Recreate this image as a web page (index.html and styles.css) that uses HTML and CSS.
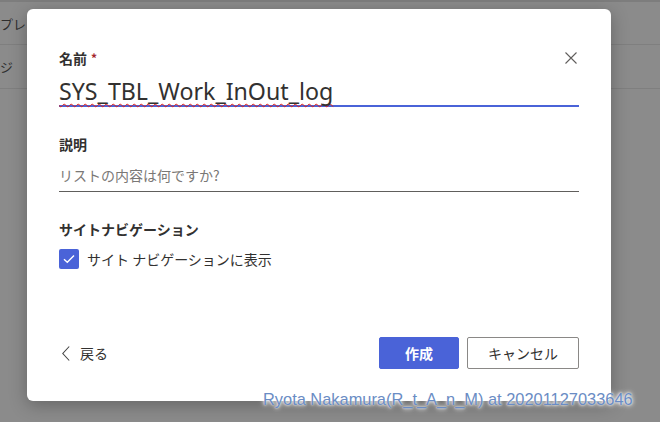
FILE: index.html
```html
<!DOCTYPE html>
<html lang="ja">
<head>
<meta charset="utf-8">
<title>リストの作成</title>
<link rel="stylesheet" href="styles.css">
</head>
<body>
<div class="page">
  <div class="page-row row-first"><span class="page-text">プレ</span></div>
  <div class="page-row"><span class="page-text">ジ</span></div>
</div>

<div class="dialog">
  <div class="label-row">
    <span class="label">名前<span class="req">*</span></span>
    <svg class="close" width="12" height="12" viewBox="0 0 12 12"><path d="M0.5 0.5 L11.5 11.5 M11.5 0.5 L0.5 11.5" stroke="#605e5c" stroke-width="1.1" fill="none"/></svg>
  </div>
  <div class="name-input"><span class="spell">SYS_TBL_Work_InOut_log</span></div>

  <div class="label sec">説明</div>
  <div class="desc-input">リストの内容は何ですか?</div>

  <div class="label sec">サイトナビゲーション</div>
  <div class="check-row">
    <span class="checkbox"><svg width="12" height="10" viewBox="0 0 12 10"><path d="M1 5.2 L4.3 8.3 L11 1.5" stroke="#fff" stroke-width="1.4" fill="none"/></svg></span>
    <span class="check-text">サイト ナビゲーションに表示</span>
  </div>

  <div class="footer">
    <div class="back">
      <svg width="8" height="15" viewBox="0 0 8 15"><path d="M7.2 0.5 L0.8 7.5 L7.2 14.5" stroke="#444" stroke-width="1.1" fill="none"/></svg>
      <span>戻る</span>
    </div>
    <div class="buttons">
      <button class="btn primary">作成</button>
      <button class="btn secondary">キャンセル</button>
    </div>
  </div>
</div>

<div class="watermark">Ryota Nakamura(R_t_A_n_M) at 20201127033646</div>
</body>
</html>
```

FILE: styles.css
```css
html, body {
  margin: 0;
  padding: 0;
}
body {
  width: 660px;
  height: 422px;
  overflow: hidden;
  background: #8b8b8b;
  font-family: "Noto Sans CJK JP", "Noto Sans", sans-serif;
  position: relative;
}
.page {
  border-top: 2px solid #7d7d7d;
}
.page-row {
  height: 43px;
  border-bottom: 1px solid #7f7f7f;
  display: flex;
  align-items: center;
  overflow: hidden;
}
.row-first {
  height: 42px;
}
.page-text {
  font-size: 13px;
  color: #2e2e2e;
  white-space: nowrap;
}

.dialog {
  position: absolute;
  left: 27px;
  top: 9px;
  width: 584px;
  height: 392px;
  box-sizing: border-box;
  background: #fff;
  border-radius: 6px;
  box-shadow: 0 4px 18px rgba(0, 0, 0, 0.28);
  padding: 40px 32px 32px;
  display: flex;
  flex-direction: column;
}
.label-row {
  display: flex;
  justify-content: space-between;
  align-items: center;
  height: 18px;
}
.label {
  font-size: 14px;
  font-weight: 700;
  line-height: 18px;
  color: #323130;
}
.req {
  color: #a4262c;
  font-size: 12px;
  margin-left: 4px;
  vertical-align: top;
}
.close {
  margin-right: 2px;
}
.name-input {
  margin-top: 8px;
  height: 28px;
  padding-top: 2px;
  line-height: 28px;
  font-family: "Noto Sans", "Open Sans", sans-serif;
  font-size: 23.2px;
  color: #323130;
  border-bottom: 2px solid #4a63d8;
}
.spell {
  text-decoration: underline wavy #e0201a;
  text-decoration-thickness: 1px;
  text-decoration-skip-ink: none;
  text-underline-offset: 3px;
}
.sec {
  margin-top: 28px;
}
.desc-input {
  margin-top: 7px;
  height: 31px;
  line-height: 31px;
  font-size: 14px;
  color: #7a7876;
  border-bottom: 1px solid #605e5c;
}
.check-row {
  margin-top: 11px;
  display: flex;
  align-items: center;
  gap: 8px;
  height: 20px;
}
.checkbox {
  width: 20px;
  height: 20px;
  border-radius: 2px;
  background: #4a63d8;
  display: flex;
  align-items: center;
  justify-content: center;
}
.check-text {
  font-size: 14px;
  color: #323130;
}
.footer {
  margin-top: auto;
  display: flex;
  justify-content: space-between;
  align-items: center;
  height: 32px;
}
.back {
  display: flex;
  align-items: center;
  gap: 10px;
  padding-left: 3px;
  font-size: 14px;
  color: #323130;
}
.buttons {
  display: flex;
  gap: 8px;
}
.btn {
  height: 32px;
  font-family: "Noto Sans CJK JP", sans-serif;
  font-size: 14px;
  border-radius: 2px;
  padding: 0;
  cursor: pointer;
}
.primary {
  width: 80px;
  background: #4a63d8;
  border: 1px solid #4a63d8;
  color: #fff;
  font-weight: 700;
}
.secondary {
  width: 112px;
  background: #fff;
  border: 1px solid #8a8886;
  color: #323130;
}
.watermark {
  position: absolute;
  left: 263px;
  top: 390px;
  font-family: "Liberation Sans", Arial, sans-serif;
  font-size: 16.4px;
  color: #6a8cc4;
  white-space: nowrap;
  text-shadow: 0 0 2px #fff, 0 0 4px #fff, 0 0 6px rgba(255,255,255,0.8);
}
```
